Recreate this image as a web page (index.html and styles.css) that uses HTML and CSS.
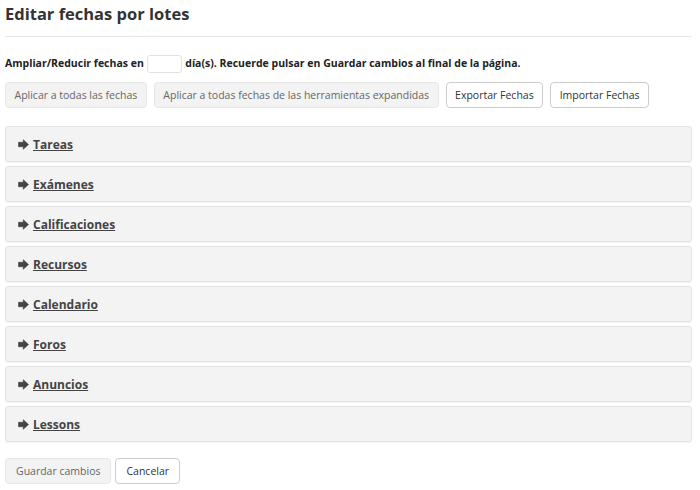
FILE: index.html
```html
<!DOCTYPE html>
<html lang="es">
<head>
<meta charset="utf-8">
<link rel="stylesheet" href="styles.css">
</head>
<body>
<div class="page">
  <h1 class="title">Editar fechas por lotes</h1>
  <hr class="rule">
  <p class="instr">Ampliar/Reducir fechas en <input class="days" type="text"> día(s). Recuerde pulsar en Guardar cambios al final de la página.</p>
  <div class="btnrow">
    <button class="btn disabled">Aplicar a todas las fechas</button>
    <button class="btn disabled">Aplicar a todas fechas de las herramientas expandidas</button>
    <button class="btn">Exportar Fechas</button>
    <button class="btn">Importar Fechas</button>
  </div>
  <div class="panels">
    <div class="panel"><svg class="arrow" viewBox="0 0 10 10"><path d="M0.5 3h4.3V0.7L9.5 5 4.8 9.3V7H0.5z" stroke-linejoin="round"/></svg><a href="#">Tareas</a></div>
    <div class="panel"><svg class="arrow" viewBox="0 0 10 10"><path d="M0.5 3h4.3V0.7L9.5 5 4.8 9.3V7H0.5z" stroke-linejoin="round"/></svg><a href="#">Exámenes</a></div>
    <div class="panel"><svg class="arrow" viewBox="0 0 10 10"><path d="M0.5 3h4.3V0.7L9.5 5 4.8 9.3V7H0.5z" stroke-linejoin="round"/></svg><a href="#">Calificaciones</a></div>
    <div class="panel"><svg class="arrow" viewBox="0 0 10 10"><path d="M0.5 3h4.3V0.7L9.5 5 4.8 9.3V7H0.5z" stroke-linejoin="round"/></svg><a href="#">Recursos</a></div>
    <div class="panel"><svg class="arrow" viewBox="0 0 10 10"><path d="M0.5 3h4.3V0.7L9.5 5 4.8 9.3V7H0.5z" stroke-linejoin="round"/></svg><a href="#">Calendario</a></div>
    <div class="panel"><svg class="arrow" viewBox="0 0 10 10"><path d="M0.5 3h4.3V0.7L9.5 5 4.8 9.3V7H0.5z" stroke-linejoin="round"/></svg><a href="#">Foros</a></div>
    <div class="panel"><svg class="arrow" viewBox="0 0 10 10"><path d="M0.5 3h4.3V0.7L9.5 5 4.8 9.3V7H0.5z" stroke-linejoin="round"/></svg><a href="#">Anuncios</a></div>
    <div class="panel"><svg class="arrow" viewBox="0 0 10 10"><path d="M0.5 3h4.3V0.7L9.5 5 4.8 9.3V7H0.5z" stroke-linejoin="round"/></svg><a href="#">Lessons</a></div>
  </div>
  <div class="btnrow bottom">
    <button class="btn disabled">Guardar cambios</button>
    <button class="btn">Cancelar</button>
  </div>
</div>
</body>
</html>
```
FILE: styles.css
```css
* { box-sizing: border-box; }
body {
  margin: 0;
  background: #fff;
  font-family: "Open Sans", "Liberation Sans", sans-serif;
  color: #333;
}
.page {
  width: 697px;
  padding: 0 5px;
}
.title {
  margin: 0;
  padding-top: 2px;
  font-size: 16.5px;
  font-weight: 700;
  line-height: 24px;
  color: #333;
}
.rule {
  margin: 10px 0 0;
  border: 0;
  border-top: 1px solid #e6e6e6;
  height: 0;
}
.instr {
  margin: 17px 0 0;
  font-size: 10.5px;
  font-weight: 700;
  line-height: 18px;
  color: #222;
}
.days {
  width: 35px;
  height: 18px;
  border: 1px solid #e2e2e2;
  border-radius: 3px;
  vertical-align: middle;
  margin: 0 1px 0 0;
  padding: 0;
  font: inherit;
}
.btnrow {
  display: flex;
  gap: 7px;
  margin-top: 9px;
}
.btn {
  height: 26px;
  padding: 0 8.5px;
  font-family: inherit;
  font-size: 10.5px;
  color: #333;
  background: #fff;
  border: 1px solid #ccc;
  border-radius: 4px;
}
.btn.disabled {
  background: #f3f3f3;
  border-color: #e6e6e6;
  color: #666;
}
.panels {
  margin-top: 18px;
  display: flex;
  flex-direction: column;
  gap: 4px;
}
.panel {
  height: 36px;
  display: flex;
  align-items: center;
  padding-left: 12px;
  background: #f3f3f3;
  border: 1px solid #e3e3e3;
  border-radius: 3px;
  box-shadow: 0 1px 1px rgba(0,0,0,0.05);
}
.arrow {
  width: 11px;
  height: 11px;
  fill: #444;
  stroke: #444;
  stroke-width: 0.6;
  margin-right: 4px;
}
.panel a {
  font-size: 12px;
  font-weight: 700;
  color: #444;
  text-decoration: underline;
}
.bottom {
  margin-top: 16px;
  gap: 4px;
}
.bottom .btn {
  padding: 0 10px;
}
```
